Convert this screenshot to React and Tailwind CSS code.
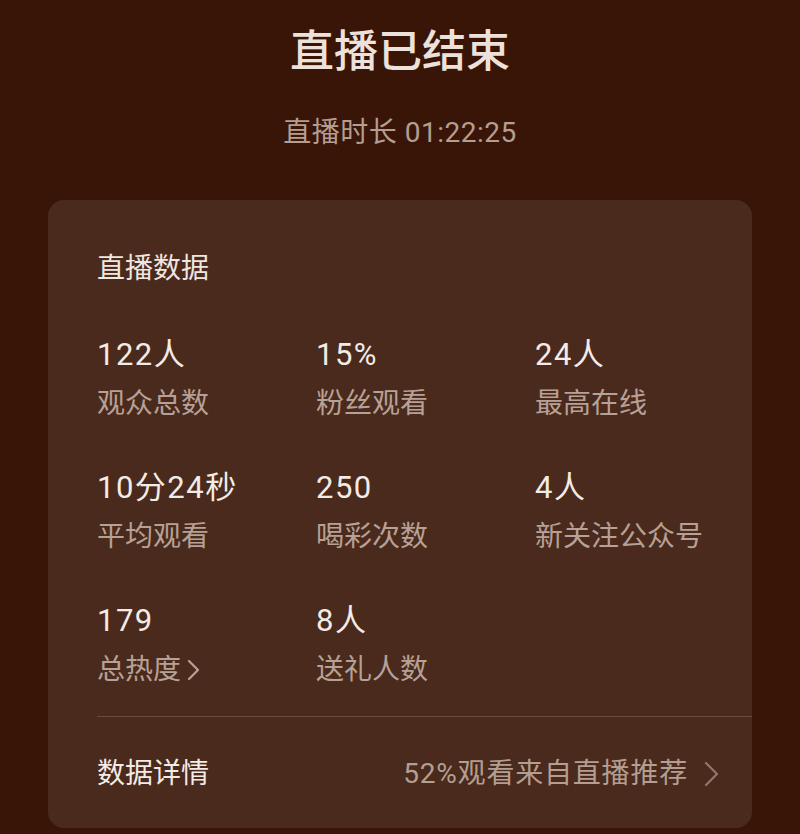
const STATS = [
  { value: '122人', label: '观众总数' },
  { value: '15%', label: '粉丝观看' },
  { value: '24人', label: '最高在线' },
  { value: '10分24秒', label: '平均观看' },
  { value: '250', label: '喝彩次数' },
  { value: '4人', label: '新关注公众号' },
  { value: '179', label: '总热度', more: true },
  { value: '8人', label: '送礼人数' },
]

const font = { fontFamily: 'Roboto, "Noto Sans CJK SC", sans-serif' }

function Chevron({ className, w = 12, h = 22, stroke = 2.4 }) {
  return (
    <svg width={w + 4} height={h + 4} viewBox={`0 0 ${w + 4} ${h + 4}`} className={className}>
      <path
        d={`M2 2 L${w + 2} ${h / 2 + 2} L2 ${h + 2}`}
        fill="none"
        stroke="currentColor"
        strokeWidth={stroke}
        strokeLinecap="round"
        strokeLinejoin="round"
      />
    </svg>
  )
}

function Stat({ value, label, more }) {
  return (
    <div className="flex flex-col">
      <div className="text-[31px] leading-[30px] tracking-[1.5px] text-[#f3ebe6]">{value}</div>
      <div className="mt-[20px] flex items-center text-[28px] leading-[27px] text-[#b7a196]">
        {label}
        {more && <Chevron w={9} h={18} stroke={2.2} className="ml-[6px] text-[#b7a196]" />}
      </div>
    </div>
  )
}

export default function App() {
  return (
    <div className="w-[800px] h-[834px] overflow-hidden bg-[#391507] flex flex-col items-center" style={font}>
      <h1 className="mt-[30px] text-[44px] leading-[44px] font-medium text-[#ede2db]">直播已结束</h1>
      <div className="mt-[46px] text-[28px] leading-[26px] tracking-[0.5px] text-[#b49e92]">直播时长 01:22:25</div>

      <div className="mt-[54px] w-[704px] rounded-[16px] bg-[#4a2a1c] pl-[49px] pt-[55px] pb-[40px]">
        <div className="text-[28px] leading-[28px] text-[#efe6e0]">直播数据</div>
        <div className="mt-[57px] grid grid-cols-[219px_219px_1fr] gap-y-[56px]">
          {STATS.map(s => (
            <Stat key={s.label} {...s} />
          ))}
        </div>
        <div className="mt-[33px] h-px bg-[#6a4c3f]" />
        <div className="mt-[43px] flex items-center justify-between pr-[33px]">
          <div className="text-[28px] leading-[28px] text-[#f3ebe6]">数据详情</div>
          <div className="flex items-center text-[28px] leading-[28px] tracking-[0.8px] text-[#b49e92]">
            52%观看来自直播推荐
            <Chevron w={11} h={22} stroke={2.2} className="ml-[16px] text-[#8f776b]" />
          </div>
        </div>
      </div>
    </div>
  )
}
